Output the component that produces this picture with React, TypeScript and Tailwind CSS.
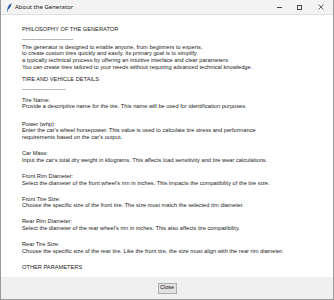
import React from 'react';

const sections = [
  { title: 'Tire Name:', lines: ['Provide a descriptive name for the tire. This name will be used for identification purposes.'] },
  {
    title: 'Power (whp):',
    lines: [
      "Enter the car's wheel horsepower. This value is used to calculate tire stress and performance",
      "requirements based on the car's output.",
    ],
  },
  { title: 'Car Mass:', lines: ["Input the car's total dry weight in kilograms. This affects load sensitivity and tire wear calculations."] },
  { title: 'Front Rim Diameter:', lines: ["Select the diameter of the front wheel's rim in inches. This impacts the compatibility of the tire size."] },
  { title: 'Front Tire Size:', lines: ['Choose the specific size of the front tire. The size must match the selected rim diameter.'] },
  { title: 'Rear Rim Diameter:', lines: ["Select the diameter of the rear wheel's rim in inches. This also affects tire compatibility."] },
  { title: 'Rear Tire Size:', lines: ['Choose the specific size of the rear tire. Like the front tire, the size must align with the rear rim diameter.'] },
];

const Feather = () => (
  <svg width="6" height="9" viewBox="0 0 6 9">
    <path d="M5.5 0.3 C3.5 1 1.8 3 1.3 6.5 L1 8.7 L1.6 8.7 L2 6.8 C4 5.5 5.3 3 5.5 0.3 Z" fill="#2f5fb3" />
  </svg>
);

const App = () => {
  return (
    <div
      className="w-[334px] h-[300px] flex flex-col border-x border-b border-[#9a9a9a] bg-white text-[#1b1b1b] overflow-hidden"
      style={{ fontFamily: '"Liberation Sans", Arial, sans-serif' }}
    >
      {/* title bar */}
      <div className="h-[15px] shrink-0 flex items-center bg-[#f3f3f3] border-b border-[#e0e0e0]">
        <div className="w-[13px] flex justify-center pl-[2px]">
          <Feather />
        </div>
        <span className="text-[6px] leading-none text-[#222] pl-[1px]" style={{ fontFamily: '"Noto Sans", sans-serif' }}>
          About the Generator
        </span>
        <div className="ml-auto flex items-center h-full text-[#333]">
          <div className="w-[20px] flex justify-center">
            <div className="w-[5px] h-px bg-[#444]" />
          </div>
          <div className="w-[20px] flex justify-center">
            <div className="w-[5px] h-[5px] border border-[#444]" />
          </div>
          <div className="w-[24px] flex justify-center">
            <svg width="6" height="6" viewBox="0 0 6 6">
              <path d="M0.5 0.5 L5.5 5.5 M5.5 0.5 L0.5 5.5" stroke="#444" strokeWidth="0.8" />
            </svg>
          </div>
        </div>
      </div>

      {/* body */}
      <div className="flex-1 pl-[21px] pt-[11px] text-[5.7px] leading-[6.8px] whitespace-nowrap">
        <div>PHILOSOPHY OF THE GENERATOR</div>
        <div className="mt-[3.3px]">---------------------------</div>
        <div className="mt-[0.7px]">
          <div>The generator is designed to enable anyone, from beginners to experts,</div>
          <div>to create custom tires quickly and easily. Its primary goal is to simplify</div>
          <div>a typically technical process by offering an intuitive interface and clear parameters.</div>
          <div>You can create tires tailored to your needs without requiring advanced technical knowledge.</div>
        </div>
        <div className="mt-[5.3px]">TIRE AND VEHICLE DETAILS</div>
        <div className="mt-[3.2px]">-----------------------</div>
        {sections.map((s, i) => (
          <div key={s.title} className={i === 0 ? 'mt-[3.7px]' : i === 1 ? 'mt-[10.4px]' : 'mt-[9.2px]'}>
            <div>{s.title}</div>
            {s.lines.map((l) => (
              <div key={l}>{l}</div>
            ))}
          </div>
        ))}
        <div className="mt-[9.2px]">OTHER PARAMETERS</div>
      </div>

      {/* footer */}
      <div className="h-[22px] shrink-0 bg-[#f0f0f0] flex items-center justify-center">
        <button className="w-[19px] h-[11px] bg-[#e1e1e1] border border-[#adadad] text-[5.5px] leading-none text-[#111] flex items-center justify-center">
          Close
        </button>
      </div>
    </div>
  );
};

export default App;
